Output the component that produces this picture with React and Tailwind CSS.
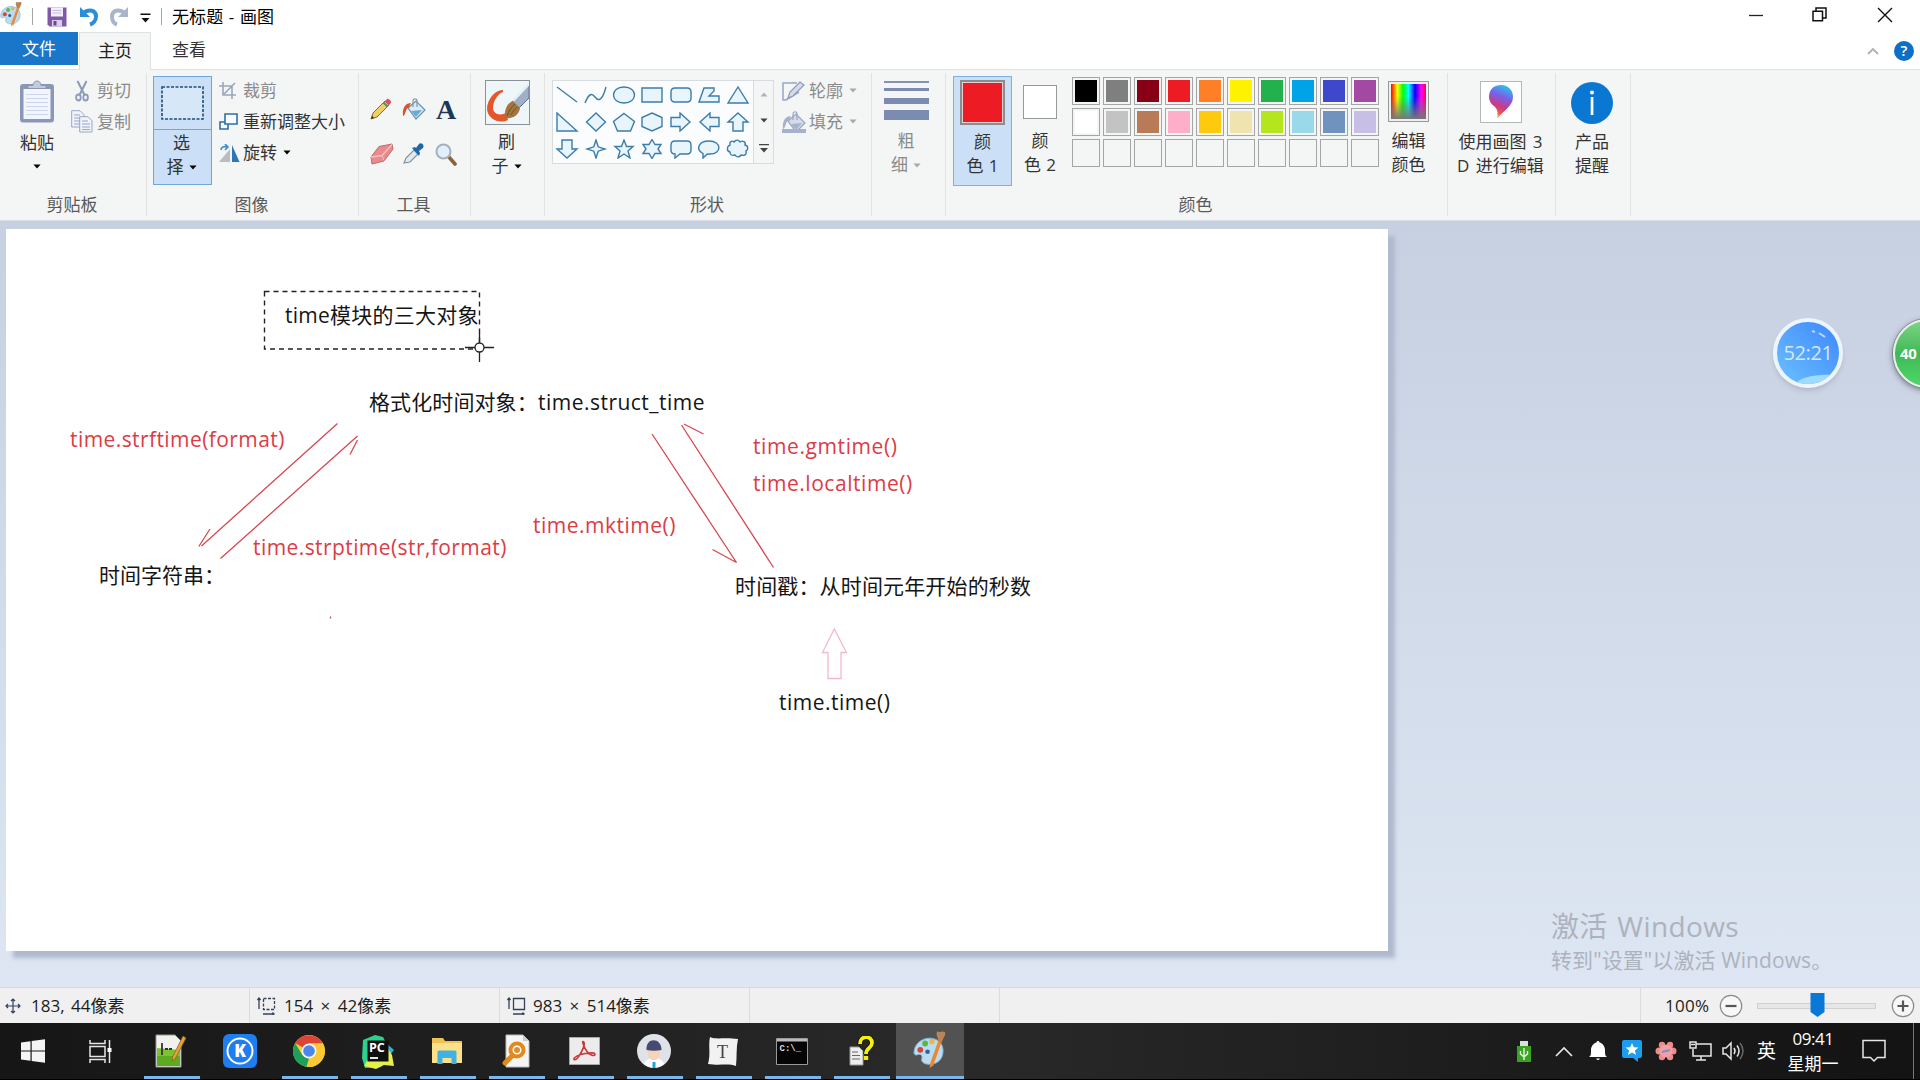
const CJK = "font-['Open_Sans','Noto_Sans_CJK_SC',sans-serif]";

const Caret = ({ className = "text-black" }) => (
  <svg width="8" height="5" viewBox="0 0 9 5" className={"shrink-0 " + className}>
    <path d="M0.5 0.3h8L4.5 4.7z" fill="currentColor" />
  </svg>
);

/* ---------- shared artwork ---------- */
const Palette = ({ size = 24, className = "" }) => (
  <svg width={size} height={size * 1.2} viewBox="0 0 34 40" className={className}>
    <path d="M17 8C8 8 1 15 1 23c0 2 2 3 4 2 3-1 5 1 4 4-1 4 3 6 8 6 9 0 14-6 14-14C31 13 25 8 17 8z" fill="#b9dcee" stroke="#7fb2cf" strokeWidth="1" />
    <circle cx="7.500" cy="20" r="3" fill="#d9433f" />
    <circle cx="12.500" cy="13.500" r="3" fill="#5cb54a" />
    <circle cx="19.500" cy="11.500" r="2.800" fill="#e8b64a" />
    <circle cx="15" cy="22" r="2.400" fill="#35619b" />
    <path d="M26 11l3.500 1L21 36l-4 3 1-6z" fill="#e8883a" />
    <path d="M25 1c3 2 5-1 8 1 1 4-2 5-3 10l-4-1c0-4-3-6-1-10z" fill="#b98458" />
  </svg>
);

/* ---------- title bar ---------- */
function TitleBar() {
  return (
    <header className="flex h-8 shrink-0 items-center bg-white">
      <Palette size={22} className="-mt-1" />
      <i className="ml-[10px] h-[17px] w-px bg-[#a5a5a5]" />
      <svg width="20" height="20" viewBox="0 0 20 20" className="ml-[14px] mt-[2px]">
        <path d="M0.500 0.500h19v19h-17l-2-2z" fill="#8058a8" />
        <path d="M4 0.500h12v9H4z" fill="#f3eff8" />
        <path d="M5.500 3.500h9M5.500 6h9" stroke="#cbb9de" />
        <path d="M5 13h10v6.500H5z" fill="#d9cfe6" />
        <path d="M6.500 14h3v4.500h-3z" fill="#6b4493" />
      </svg>
      <svg width="21" height="21" viewBox="0 0 21 21" className="ml-[12px]">
        <path d="M5 6.500C10 3 17 4 17 10.500c0 4-3 7-6 8" fill="none" stroke="#2b8fd6" strokeWidth="4" />
        <path d="M1 1v10h10z" fill="#2b8fd6" />
      </svg>
      <svg width="21" height="21" viewBox="0 0 21 21" className="ml-[8px]">
        <path d="M16 6.500C11 3 4 4 4 10.500c0 4 2 7 5 8" fill="none" stroke="#a9b5cb" strokeWidth="4" />
        <path d="M20 1v10H10z" fill="#a9b5cb" />
      </svg>
      <svg width="11" height="10" viewBox="0 0 11 10" className="ml-[11px] mt-[4px]">
        <path d="M0.500 0.500h10v1.500H.5zM1.500 5h8l-4 4.500z" fill="#111" />
      </svg>
      <i className="ml-[10px] h-[17px] w-px bg-[#a5a5a5]" />
      <span className="ml-[10px] mt-px text-[17px] tracking-[0.1px] text-black [word-spacing:1px]">无标题 - 画图</span>
      <div className="-mt-[3px] ml-auto mr-[27px] flex items-center gap-[49px]">
        <svg width="14" height="16" viewBox="0 0 14 16"><path d="M0 8.500h14" stroke="#222" strokeWidth="1.300" /></svg>
        <svg width="15" height="15" viewBox="0 0 15 15" fill="none" stroke="#111" strokeWidth="1.500">
          <path d="M1 4.200h9.500v9.500H1zM4 4V1h10v10h-3" />
        </svg>
        <svg width="16" height="16" viewBox="0 0 16 16" className="ml-[1px]"><path d="M1 1l14 14M15 1L1 15" stroke="#111" strokeWidth="1.400" /></svg>
      </div>
    </header>
  );
}

function Tabs() {
  return (
    <nav className="flex h-[38px] shrink-0 items-start border-b border-[#dfe1e3] bg-white text-[17px]">
      <span className="flex h-[33px] w-[78px] items-center justify-center bg-[#1976c9] text-white">文件</span>
      <span className="z-10 ml-px flex h-[38px] w-[72px] items-center justify-center border-x border-t border-[#dfe1e3] bg-[#f4f6f6] pb-[2px] text-[#222]">主页</span>
      <span className="ml-[21px] flex h-[36px] items-center text-[#333]">查看</span>
      <div className="ml-auto mr-[6px] flex h-[37px] items-center gap-[15px]">
        <svg width="12" height="8" viewBox="0 0 12 8"><path d="M1 7l5-5 5 5" fill="none" stroke="#b0b0b0" strokeWidth="1.800" /></svg>
        <b className="flex size-5 items-center justify-center rounded-full bg-[#0f6fc4] text-[15px] font-semibold leading-none text-white">?</b>
      </div>
    </nav>
  );
}

/* ---------- ribbon ---------- */
function Group({ width, label, children }) {
  return (
    <section className={"flex shrink-0 flex-col border-r border-[#e0e2e3] " + width}>
      <div className="flex h-[119px] items-start">{children}</div>
      <div className="flex h-[24px] items-center justify-center pr-[2px] text-[17px] leading-none text-[#5a5a5a]">{label}</div>
    </section>
  );
}

const Stack = ({ a, b, arrow, className = "" }) => (
  <div className={"flex flex-col items-center text-[17px] leading-6 " + className}>
    <span>{a}</span>
    <span className="flex items-center gap-[5px]">{b}{arrow && <Caret className={arrow} />}</span>
  </div>
);

const PasteIcon = () => (
  <svg width="36" height="44" viewBox="0 0 36 44">
    <rect x="1" y="4" width="34" height="38.500" rx="3" fill="#8b97b6" />
    <path d="M4.500 9h27v30h-27z" fill="#f2f5fb" />
    <path d="M7 14.500h22M7 18.500h22M7 22.500h22M7 26.500h22M7 30.500h22M7 34.500h22" stroke="#cbd6e8" />
    <path d="M9 8.500V5.500h5c0-6 8-6 8 0h5v3z" fill="#c3cbdd" stroke="#8b97b6" />
  </svg>
);
const CutIcon = () => (
  <svg width="14" height="22" viewBox="0 0 14 22" fill="none" stroke="#8d9ab8">
    <path d="M2.500 1L9.500 15M11.500 1L4.500 15" strokeWidth="2" />
    <ellipse cx="3.400" cy="17.500" rx="2.300" ry="3" strokeWidth="1.800" />
    <ellipse cx="10.600" cy="17.500" rx="2.300" ry="3" strokeWidth="1.800" />
  </svg>
);
const CopyIcon = () => (
  <svg width="22" height="23" viewBox="0 0 22 23" fill="#f1f4fb" stroke="#98a5c3">
    <path d="M0.700 0.700h8.300l4 4V17H.7z" /><path d="M3 5h6M3 8h6M3 11h6M3 14h6" />
    <path d="M8.700 6.700h8.300l4 4V22H8.700z" /><path d="M11 11h6M11 14h8M11 17h8M11 19.500h8" />
  </svg>
);
const CropIcon = () => (
  <svg width="18" height="17" viewBox="0 0 18 17" fill="none" stroke="#9ba6bd" strokeWidth="1.600">
    <path d="M4 0v13h13M0 4h13v13M5 12L16 1" />
  </svg>
);
const ResizeIcon = () => (
  <svg width="19" height="17" viewBox="0 0 19 17" fill="#f8fbfe" stroke="#2f6fa6" strokeWidth="1.600">
    <path d="M1 9h8v7H1z" /><path d="M6 1h12v10H6z" />
  </svg>
);
const RotateIcon = () => (
  <svg width="21" height="18" viewBox="0 0 21 18">
    <path d="M11 5v13H0z" fill="#b9bcc0" /><path d="M13 1v17h7.500z" fill="#2c78b4" />
    <path d="M2 6c0-3 3-4 6-3M6 0l3 3-3 3" fill="none" stroke="#3b8bd0" strokeWidth="1.600" />
  </svg>
);

const Pencil = () => (
  <svg width="22" height="22" viewBox="0 0 22 22">
    <path d="M1 21l2-6L15 3l4 4L7 19z" fill="#f3cf63" stroke="#8d6b2e" />
    <path d="M15 3l2-2c1-1 5 2 4 4l-2 2z" fill="#d9536a" /><path d="M13.500 4.500l4 4" stroke="#5d8a6b" strokeWidth="2" />
    <path d="M1 21l1.200-3.200L4 20z" fill="#333" />
  </svg>
);
const Bucket = ({ muted }) => (
  <svg width="24" height="22" viewBox="0 0 24 22">
    <path d="M6 10l8-7 9 9-9 9z" fill={muted ? "#d5dbe9" : "#d9ecf8"} stroke={muted ? "#98a5c3" : "#6792b3"} strokeWidth="1.200" />
    <path d="M9 13l11-1-6 7z" fill={muted ? "#a6b1cb" : "#66aada"} />
    <path d="M11 9V3c0-3 4-3 4 0v6" fill="none" stroke={muted ? "#98a5c3" : "#8296a4"} strokeWidth="1.200" />
    <path d="M9 5C4 5 0 9 1 18c3-1 2-7 6-9z" fill={muted ? "#a6b1cb" : "#d9532c"} />
    {muted && <path d="M0 18h24v4H0z" fill="#a6b1cb" />}
  </svg>
);
const Eraser = () => (
  <svg width="24" height="22" viewBox="0 0 24 22">
    <path d="M1 14L9 3.500l13-2.500 1 5-9 12L2 21z" fill="#e98a8d" stroke="#c2686c" />
    <path d="M1 14l11-1.500L22 1.500" fill="none" stroke="#f7bfc0" strokeWidth="1.400" /><path d="M12 12.500l2 5" stroke="#f7bfc0" />
  </svg>
);
const Dropper = () => (
  <svg width="23" height="22" viewBox="0 0 23 22">
    <path d="M2 20L4 15 12 7l4 4-8 8z" fill="#dfe9f0" stroke="#85929d" strokeWidth="1.200" />
    <path d="M10 5l3-1 1 1 3-4c2-2 6 1 4 4l-4 3 1 2-1 3z" fill="#1f66ab" />
  </svg>
);
const Magnifier = () => (
  <svg width="22" height="23" viewBox="0 0 22 23">
    <path d="M13 13l7 8" stroke="#8a6339" strokeWidth="3.600" strokeLinecap="round" />
    <circle cx="8.500" cy="8.500" r="7" fill="#e1effb" stroke="#a6afbb" strokeWidth="2" />
  </svg>
);
const BrushArt = () => (
  <svg width="43" height="43" viewBox="0 0 43 43">
    <path d="M0 0h43v43H0z" fill="#eef6f9" />
    <path d="M17 9C11 8 1 17 1 28c1 11 13 15 21 11l-2-7c-6 3-13 1-13-5 0-8 6-15 10-16z" fill="#e4572b" />
    <path d="M43 3v14L32 28l-7-6z" fill="#9fb0c6" stroke="#61728d" /><path d="M43 3L27 20" stroke="#e5edf5" strokeWidth="2.500" />
    <path d="M19 37c-1-8 2-15 8-17l7 7c-1 7-7 11-15 10z" fill="#a3763f" /><path d="M21 35c2-5 4-9 8-12M25 34c2-4 4-6 6-8" stroke="#6f4e28" fill="none" />
  </svg>
);

const SHAPES = [
  "M2 2l20 15", "M1 18C5 8 8 8 11 12s7 5 11-10", "M12 2c14 0 14 16 0 16S-2 2 12 2z", "M2 3h20v14H2z",
  "M6 3h12q4 0 4 4v6q0 4-4 4H6q-4 0-4-4V7q0-4 4-4z", "M2 17L7 3h10v3l-5 5h10v6z", "M12 2l10 16H2z",
  "M2 1v18h20z", "M12 1l9.500 9L12 19l-9.500-9z", "M12 1.500l10.500 8L18.500 19h-13L1.500 9.500z", "M12 1l10 4.500v9L12 19 2 14.500v-9z",
  "M2 5.500h9V1l10 9-10 9v-4.500H2z", "M22 5.500h-9V1L3 10l10 9v-4.500h9z", "M12 1l10 9h-5v9H7v-9H2z",
  "M7 1h10v9h5l-10 9-10-9h5z", "M12 1l2.200 6.800L21 10l-6.800 2.200L12 19l-2.200-6.800L3 10l6.800-2.200z",
  "M12 1l2.500 6.500H21l-5 4.500 2 7-6-4-6 4 2-7-5-4.500h6.500z", "M12 0.500l3 5h6L18 10l3 4.500h-6l-3 5-3-5H3L6 10 3 5.500h6z",
  "M6 2h12q4 0 4 4v5q0 4-4 4h-7l-5 4v-4q-4 0-4-4V6q0-4 4-4z", "M12 2c13 0 13 13 1 13l-3 .2L6 19v-4.500C-2 10 2 2 12 2z",
  "M8 3c2-3 5-2 6 0 3-2 6 0 5 3 4 1 3 5 1 6 1 4-2 5-5 4-2 3-5 2-6 0-3 1-5 0-5-3-4-1-3-6 0-7-1-3 2-5 4-3z",
];

const Outline = () => (
  <svg width="23" height="20" viewBox="0 0 23 20">
    <path d="M15 2H1v17h3l13-8" fill="none" stroke="#98a5c3" strokeWidth="1.500" />
    <path d="M6 17l2-6L18 1l4 3-11 11z" fill="#d5dbe9" stroke="#8d9bbb" strokeWidth="1.200" />
  </svg>
);

const ROW1 = ["bg-black", "bg-[#7f7f7f]", "bg-[#880015]", "bg-[#ed1c24]", "bg-[#ff7f27]", "bg-[#fff200]", "bg-[#22b14c]", "bg-[#00a2e8]", "bg-[#3f48cc]", "bg-[#a349a4]"];
const ROW2 = ["bg-white", "bg-[#c3c3c3]", "bg-[#b97a57]", "bg-[#ffaec9]", "bg-[#ffc90e]", "bg-[#efe4b0]", "bg-[#b5e61d]", "bg-[#99d9ea]", "bg-[#7092be]", "bg-[#c8bfe7]"];
const ROW3 = Array(10).fill("bg-transparent");

function Ribbon() {
  return (
    <div className="flex h-[151px] shrink-0 border-b border-[#dadfe8] bg-[#f4f6f6] pb-[4px] pt-[3px] text-[#333]">
      <Group width="w-[147px]" label="剪贴板">
        <div className="ml-[18px] mt-[7px] flex w-[38px] flex-col items-center">
          <PasteIcon />
          <span className="mt-[5px] text-[17px] leading-7">粘贴</span>
          <Caret className="mt-[7px] text-black" />
        </div>
        <div className="ml-[15px] mt-[7px] flex flex-col gap-[8px] text-[17px] leading-[22px] text-[#8b8b8b]">
          <div className="flex h-[22px] items-center gap-[8px] pl-[4px]"><CutIcon />剪切</div>
          <div className="flex h-[23px] items-center gap-[4px]"><CopyIcon />复制</div>
        </div>
      </Group>

      <Group width="w-[212px]" label="图像">
        <div className="ml-[6px] mt-[3px] flex h-[109px] w-[59px] flex-col items-center border border-[#6fa6dc] bg-[#cbe0f6]">
          <div className="flex h-[53px] w-full items-center justify-center border-b border-[#6fa6dc]">
            <svg width="43" height="34" viewBox="0 0 43 34"><rect x="1" y="1" width="41" height="32" fill="#d6e8f8" stroke="#1e4d78" strokeWidth="1.600" strokeDasharray="3 1.500" /></svg>
          </div>
          <Stack a="选" b="择" arrow="text-black" className="-ml-[2px] mt-px" />
        </div>
        <div className="ml-[7px] mt-[2px] flex flex-col text-[17px]">
          <div className="flex h-[31px] items-center gap-[6px] text-[#8b8b8b]"><CropIcon />裁剪</div>
          <div className="flex h-[31px] items-center gap-[5px]"><ResizeIcon />重新调整大小</div>
          <div className="flex h-[31px] items-center gap-[3px]"><RotateIcon />旋转<Caret className="ml-[3px] text-black" /></div>
        </div>
      </Group>

      <Group width="w-[112px]" label="工具">
        <div className="ml-[11px] mt-[25px] grid grid-cols-[32px_33px_24px] grid-rows-[45px_24px] items-start">
          <Pencil /><Bucket /><b className="pl-[1px] font-['Liberation_Serif',serif] text-[28px] leading-[24px] text-[#1c3558]">A</b>
          <Eraser /><Dropper /><Magnifier />
        </div>
      </Group>

      <Group width="w-[74px]" label="">
        <div className="flex w-full flex-col items-center pt-[7px]">
          <div className="border border-[#8a9297]"><BrushArt /></div>
          <Stack a="刷" b="子" arrow="text-black" className="-ml-[2px] mt-[5px]" />
        </div>
      </Group>

      <Group width="w-[327px]" label="形状">
        <div className="ml-[7px] mt-[7px] flex h-[84px] w-[222px] border border-[#d9dcdf] bg-[#fafcfd]">
          <div className="grid w-[200px] grid-cols-7 grid-rows-3 place-items-center pr-[1px]">
            {SHAPES.map((d, i) => (
              <svg key={i} width="24" height="20" viewBox="0 0 24 20"><path d={d} fill={i < 2 ? "none" : "#e9f5fc"} stroke="#3c7cab" strokeWidth="1.400" /></svg>
            ))}
          </div>
          <div className="flex w-5 flex-col items-center justify-around border-l border-[#d9dcdf] bg-[#f4f6f6]">
            <Caret className="rotate-180 text-[#b0b4b8]" />
            <Caret className="text-[#444]" />
            <svg width="10" height="9" viewBox="0 0 10 9"><path d="M0 0h10v1.300H0zM1 4h8L5 8.500z" fill="#444" /></svg>
          </div>
        </div>
        <div className="ml-[8px] mt-[2px] flex flex-col text-[17px] text-[#8b8b8b]">
          <div className="flex h-[31px] items-center gap-[4px]"><Outline />轮廓<Caret className="ml-[2px] text-[#a8a8a8]" /></div>
          <div className="flex h-[31px] items-center gap-[3px]"><Bucket muted />填充<Caret className="ml-[3px] text-[#a8a8a8]" /></div>
        </div>
      </Group>

      <Group width="w-[74px]" label="">
        <div className="ml-[12px] flex w-[45px] flex-col items-center pt-[8px]">
          <i className="h-[2px] w-full bg-[#8493b5]" /><i className="mt-[5px] h-[3px] w-full bg-[#7c8cb0]" />
          <i className="mt-[7px] h-[6px] w-full bg-[#7c8cb0]" /><i className="mt-[6px] h-[10px] w-full bg-[#7c8cb0]" />
          <Stack a="粗" b="细" arrow="text-[#a8a8a8]" className="-ml-px mt-[9px] text-[#8b8b8b]" />
        </div>
      </Group>

      <Group width="w-[502px]" label="颜色">
        <div className="ml-[7px] mt-[3px] flex h-[110px] w-[59px] flex-col items-center border border-[#7db1e6] bg-[#cbe0f6] pt-[3px]">
          <div className="size-[45px] border-2 border-[#8c8c8c] bg-[#ed1c24] outline-1 -outline-offset-3 outline-[#e6d0d4]" />
          <Stack a="颜" b="色 1" className="mt-[5px] [word-spacing:1px]" />
        </div>
        <div className="ml-[1px] flex w-[54px] flex-col items-center pt-[12px]">
          <div className="size-[34px] border border-[#999] bg-white" />
          <Stack a="颜" b="色 2" className="mt-[10px] [word-spacing:1px]" />
        </div>
        <div className="ml-[5px] mt-[4px] grid grid-cols-10 gap-[3px]">
          {[...ROW1, ...ROW2, ...ROW3].map((c, i) => (
            <div key={i} className="size-7 border border-[#a3a5a7] p-[2px]"><div className={"size-full " + c} /></div>
          ))}
        </div>
        <div className="ml-[9px] mt-[8px] flex flex-col items-center">
          <div className="size-[41px] border border-[#999] bg-[#eee] p-[2px]">
            <div className="size-full bg-[linear-gradient(to_top,#777_0%,transparent_65%),linear-gradient(to_right,#f00,#ff0_18%,#0f0_34%,#0ff_50%,#00f_68%,#f0f_86%,#f04)]" />
          </div>
          <Stack a="编辑" b="颜色" className="mt-[7px]" />
        </div>
      </Group>

      <Group width="w-[108px]" label="">
        <div className="-ml-px flex w-full flex-col items-center pt-[8px]">
          <div className="flex size-[42px] items-center justify-center border border-[#b5b8bb] bg-white">
            <svg width="26" height="36" viewBox="0 0 26 36">
              <defs>
                <linearGradient id="drop" x1="0.700" y1="0" x2="0.400" y2="1">
                  <stop offset="0" stopColor="#28c8ee" /><stop offset="0.350" stopColor="#7a5fe8" /><stop offset="0.650" stopColor="#c93a84" /><stop offset="0.850" stopColor="#f05a4a" /><stop offset="1" stopColor="#ffd23a" />
                </linearGradient>
              </defs>
              <path d="M13 1c8 0 12 6 12 12 0 9-9 13-16 22 1-5 1-9-2-12C3 20 1 17 1 13 1 6 5 1 13 1z" fill="url(#drop)" />
            </svg>
          </div>
          <Stack a="使用画图 3" b="D 进行编辑" className="mt-[7px] whitespace-pre [word-spacing:2px]" />
        </div>
      </Group>

      <Group width="w-[75px]" label="">
        <div className="-ml-px flex w-full flex-col items-center pt-[9px]">
          <div className="size-[42px] rounded-full bg-[#0a78d2]">
            <svg width="42" height="42" viewBox="0 0 42 42" fill="#fff"><circle cx="21" cy="10.500" r="2" /><path d="M19.700 15h2.700v18h-2.700z" /></svg>
          </div>
          <Stack a="产品" b="提醒" className="mt-[6px]" />
        </div>
      </Group>
    </div>
  );
}

/* ---------- drawing area ---------- */
const Note = ({ className, children }) => (
  <span className={"absolute whitespace-nowrap text-[21px] leading-[30px] " + className}>{children}</span>
);

function Workspace() {
  return (
    <main className="relative h-[766px] shrink-0 overflow-hidden bg-linear-to-b from-[#c6d0e1] to-[#dde6f2] pl-[6px] pt-[8px]">
      <div className="relative h-[722px] w-[1382px] bg-white text-[#151515] shadow-[7px_7px_4px_0px_#b0bace]">
        <svg width="1382" height="722" viewBox="6 229 1382 722" className="absolute inset-0" fill="none">
          <g stroke="#d8474f" strokeWidth="1.300">
            <path d="M337.500 423.500L201.500 546M198.800 546.500L210 529" />
            <path d="M220.500 558.500L357.500 436M357.500 440L350 454.500" />
            <path d="M652 434L736.500 562.500L712.500 549.500" />
            <path d="M773.500 567.500L681.500 425M684 424L703.500 434" />
            <path d="M330.500 616.500v2" />
          </g>
          <path d="M834.300 629L846.500 652.500H841V678.500H828V652.500H822.500z" stroke="#f4b8cd" strokeWidth="1.300" />
          <rect x="264.500" y="291.500" width="215" height="57.500" stroke="#222" strokeWidth="1.400" strokeDasharray="5 4" />
          <g stroke="#222" strokeWidth="1.300"><circle cx="479.500" cy="347.500" r="4.500" fill="#fff" /><path d="M465 347.500h10M484 347.500h10M479.500 333v10M479.500 352v10" /></g>
        </svg>
        <Note className="left-[279px] top-[71px] tracking-[0.25px]">time模块的三大对象</Note>
        <Note className="left-[363px] top-[158px] tracking-[0.1px]">格式化时间对象：</Note>
        <Note className="left-[532px] top-[158px] tracking-[0.48px]">time.struct_time</Note>
        <Note className="left-[64px] top-[195px] tracking-[0.42px] text-[#dc3c46]">time.strftime(format)</Note>
        <Note className="left-[247px] top-[303px] tracking-[0.42px] text-[#dc3c46]">time.strptime(str,format)</Note>
        <Note className="left-[527px] top-[281px] tracking-[0.5px] text-[#dc3c46]">time.mktime()</Note>
        <Note className="left-[747px] top-[202px] tracking-[0.6px] text-[#dc3c46]">time.gmtime()</Note>
        <Note className="left-[747px] top-[239px] tracking-[0.55px] text-[#dc3c46]">time.localtime()</Note>
        <Note className="left-[93px] top-[331px]">时间字符串：</Note>
        <Note className="left-[729px] top-[342px] tracking-[0.15px]">时间戳：从时间元年开始的秒数</Note>
        <Note className="left-[773px] top-[458px] tracking-[0.5px]">time.time()</Note>
      </div>
      <div className="absolute left-[1551px] top-[685px] whitespace-nowrap text-[#acb3be]">
        <div className="text-[28px] leading-[40px] tracking-[0.35px] [word-spacing:2px]">激活 Windows</div>
        <div className="text-[21px] leading-[28px] tracking-[0.1px]">转到"设置"以激活 Windows。</div>
      </div>
      <div className="absolute left-[1773px] top-[97px] flex size-[70px] items-center justify-center overflow-hidden rounded-full border-4 border-[#eef4fb] bg-linear-to-tr from-[#6cc0ff] to-[#3f86fb] text-[20px] tracking-[-0.4px] text-[#d4e8ff] shadow-md">
        <svg width="62" height="62" viewBox="0 0 62 62" className="absolute inset-0"><path d="M20 60c8-6 20-8 42-7v9H20z" fill="#9edcff" /><path d="M35 9l3 1M42 11l6 4" stroke="#b7d6ff" strokeWidth="2" /></svg>
        <span className="relative">52:21</span>
      </div>
      <div className="absolute left-[1893px] top-[98px] flex size-[69px] items-center rounded-full border-2 border-[#e9f0ec] bg-linear-to-b from-[#7bd485] via-[#3fb956] to-[#4fd867] pl-[5px] text-[15px] font-bold tracking-tight text-white shadow-[0_2px_6px_#667] ring-1 ring-[#7d8f8a]">40</div>
    </main>
  );
}

/* ---------- status bar ---------- */
const ZoomButton = ({ plus }) => (
  <svg width="24" height="24" viewBox="0 0 24 24"><circle cx="12" cy="12" r="10.700" fill="#f7f7f7" stroke="#8a8a8a" strokeWidth="1.200" /><path d={plus ? "M6.500 12h11M12 6.500v11" : "M6.500 12h11"} stroke="#555" strokeWidth="2.200" /></svg>
);

function StatusBar() {
  return (
    <footer className="flex h-[36px] shrink-0 items-stretch border-t border-[#d5dae1] bg-[#f0f0f0] text-[17px] text-[#1d1d1d] *:flex *:items-center">
      <div className="w-[250px] gap-[10px] border-r border-[#dcdcdc] pl-[5px] [word-spacing:2px]">
        <svg width="16" height="16" viewBox="0 0 16 16" stroke="#33415c" fill="none" strokeWidth="1.200"><path d="M8 1v14M1 8h14M6 3l2-2 2 2M6 13l2 2 2-2M3 6L1 8l2 2M13 6l2 2-2 2" /></svg>
        183, 44像素
      </div>
      <div className="w-[250px] gap-[8px] border-r border-[#dcdcdc] pl-[7px] [word-spacing:3px]">
        <svg width="19" height="18" viewBox="0 0 19 18" stroke="#33415c" fill="none" strokeWidth="1.300"><path d="M2 1v11M0.500 3L2 1l1.500 2M6 17h11M15.500 15.500L17 17l-1.500 1" /><path d="M6.500 1.500h11v11h-11z" strokeDasharray="3 1.500" /></svg>
        154 × 42像素
      </div>
      <div className="w-[250px] gap-[7px] border-r border-[#dcdcdc] pl-[7px] [word-spacing:3px]">
        <svg width="19" height="18" viewBox="0 0 19 18" stroke="#33415c" fill="none" strokeWidth="1.300"><path d="M2 1v11M0.500 3L2 1l1.500 2M6 17h11M15.500 15.500L17 17l-1.500 1" /><path d="M6.500 1.500h11v11h-11z" /></svg>
        983 × 514像素
      </div>
      <div className="w-[250px] border-r border-[#dcdcdc]" />
      <div className="w-[641px] border-r border-[#dcdcdc]" />
      <div className="flex-1 pl-[24px]">
        <span className="w-[54px] tracking-[0.3px]">100%</span>
        <ZoomButton />
        <div className="relative ml-[14px] h-[6px] w-[119px] border border-[#d0d0d0] bg-[#e6e6e6]">
          <svg width="15" height="24" viewBox="0 0 15 24" className="absolute -top-[11px] left-[52px]"><path d="M0.500 0h14v19l-7 5-7-5z" fill="#0a78d7" /></svg>
        </div>
        <div className="ml-[15px] flex"><ZoomButton plus /></div>
      </div>
    </footer>
  );
}

/* ---------- taskbar ---------- */
const NotepadPP = () => (
  <svg width="32" height="34" viewBox="0 0 32 34"><path d="M1 1h19l6 6v26H1z" fill="#f1f1ee" stroke="#999" /><path d="M2 14l23 2v16H2z" fill="#7cc42e" /><path d="M2 22h23v10H2z" fill="#5cab20" /><path d="M7 9v12M10 15h3M14 15h3" stroke="#333" strokeWidth="1.800" /><path d="M28 2l3 2-11 21-3 2 .5-4z" fill="#e3a33b" stroke="#8a5b1c" strokeWidth=".7" /></svg>
);
const KApp = () => (
  <svg width="34" height="34" viewBox="0 0 34 34"><rect width="34" height="34" rx="6" fill="#1f7df2" /><circle cx="17" cy="17" r="12.500" fill="none" stroke="#fff" strokeWidth="2" /><text x="17" y="23" textAnchor="middle" fontSize="17" fontWeight="800" fill="#fff" fontFamily="Open Sans">K</text></svg>
);
const Chrome = () => (
  <svg width="32" height="32" viewBox="0 0 32 32"><circle cx="16" cy="16" r="16" fill="#fbc934" /><path d="M16 16L2.100 8A16 16 0 0 1 29.900 8.500H16z" fill="#dc4437" /><path d="M2.100 8l7.200 12L16 23.500 13.500 31.800A16 16 0 0 1 2.100 8z" fill="#1fa05a" /><path d="M16 8.500h13.900A16 16 0 0 1 14 31.900L22 20z" fill="#fbc934" /><circle cx="16" cy="16" r="7.500" fill="#f4f4f4" /><circle cx="16" cy="16" r="5.800" fill="#4a86ec" /></svg>
);
const PyCharm = () => (
  <svg width="34" height="35" viewBox="0 0 34 35"><path d="M2 6L14 1l8 2 4 8-6 22-16 1-3-10z" fill="#2fd08c" /><path d="M24 8l9 8-4 5z" fill="#24b5e0" /><path d="M26 13l5 8 2 11-10-1-8 4-12-3 5-9z" fill="#e6f04d" /><rect x="6.500" y="6.500" width="21" height="21" fill="#101010" /><text x="8" y="18" fontSize="12.500" fontWeight="700" fill="#fff" fontFamily="Open Sans">PC</text><path d="M9 24h8" stroke="#fff" strokeWidth="1.800" /></svg>
);
const Explorer = () => (
  <svg width="32" height="28" viewBox="0 0 32 28"><path d="M1 3V1h11l2 3h17v22H1z" fill="#efc253" /><path d="M1 6h30v20H1z" fill="#fde08a" /><path d="M6.500 27V15q0-1.500 1.500-1.500h16q1.500 0 1.500 1.500v12h-5v-6h-9v6z" fill="#3fb1e3" /></svg>
);
const SearchDoc = () => (
  <svg width="28" height="34" viewBox="0 0 28 34"><path d="M4 1h17l6 6v26H4z" fill="#f5f5f5" stroke="#bbb" /><path d="M21 1v6h6" fill="#ccc" /><path d="M11 21l-8 8" stroke="#e08a1e" strokeWidth="5" strokeLinecap="round" /><circle cx="15" cy="16" r="6.500" fill="#fff" stroke="#e08a1e" strokeWidth="4" /><circle cx="15" cy="16" r="3" fill="#d9902f" /></svg>
);
const Pdf = () => (
  <svg width="31" height="28" viewBox="0 0 31 28"><path d="M0.500 0.500h30v27H.5z" fill="#ececec" stroke="#aaa" /><path d="M14 4.500c3 1 0 8-3 13-2 4-5 6-6 5-1-2 5-5 11-6s10-1 10 1-5 1-8-3-5-10-4-10z" fill="none" stroke="#c8373a" strokeWidth="1.600" /></svg>
);
const Avatar = () => (
  <svg width="34" height="34" viewBox="0 0 34 34"><circle cx="17" cy="17" r="17" fill="#dfe2e8" /><path d="M7 30c2-5 6-6 10-6s8 1 10 6c-6 5-14 5-20 0z" fill="#fff" /><path d="M15.500 28h3v6h-3z" fill="#1ca5d8" /><path d="M11 12h12v8c0 8-12 8-12 0z" fill="#f6d3bb" /><path d="M9.500 16c-1-13 15-13 15 0-5 1-10 1-15 0z" fill="#454a70" /></svg>
);
const Typora = () => (
  <svg width="32" height="31" viewBox="0 0 32 31"><path d="M3 1c6 3 14 0 28 2-2 9-1 18-2 27-8-3-16 0-28-2C4 18 1 10 3 1z" fill="#f2f2f2" /><text x="15.500" y="22" textAnchor="middle" fontSize="18" fill="#444" fontFamily="Liberation Serif">T</text></svg>
);
const Cmd = () => (
  <svg width="32" height="27" viewBox="0 0 32 27"><path d="M0.500 0.500h31v26H.5z" fill="#050505" stroke="#9a9a9a" /><path d="M1 1h30v2.500H1z" fill="#bbb" /><text x="3.500" y="13" fontSize="9" fontWeight="700" fill="#ddd" fontFamily="Liberation Mono">C:\_</text></svg>
);
const HelpDoc = () => (
  <svg width="26" height="30" viewBox="0 0 26 30"><path d="M2 11h9l4 4v14H2z" fill="#eee" stroke="#999" /><path d="M4 16h6M4 19.500h8M4 23h8" stroke="#666" /><path d="M12 8c0-9 12-9 12-1 0 5-6 5-6 11" fill="none" stroke="#111" strokeWidth="5.500" /><path d="M12 8c0-9 12-9 12-1 0 5-6 5-6 11" fill="none" stroke="#f5f00a" strokeWidth="3.800" /><path d="M15.800 20h4.400v4h-4.400z" fill="#f5f00a" /></svg>
);

const APPS = [
  [NotepadPP, true], [KApp, false], [Chrome, true], [PyCharm, true], [Explorer, true], [SearchDoc, true],
  [Pdf, true], [Avatar, true], [Typora, true], [Cmd, true], [HelpDoc, true],
];

function Taskbar() {
  return (
    <div className="flex h-[57px] shrink-0 items-stretch border-b border-black bg-linear-to-r from-[#161616] via-[#292929] to-[#131313] text-white">
      <div className="flex w-[66px] items-center justify-center">
        <svg width="24" height="24" viewBox="0 0 24 24" fill="#f4f4f4"><path d="M0 3.500l9.500-1.300v9.300H0zM10.700 2L24 .2v11.300H10.700zM0 12.600h9.500v9.200L0 20.500zM10.700 12.600H24v11.200L10.700 22z" /></svg>
      </div>
      <div className="flex w-[71px] items-center justify-center pr-px">
        <svg width="24" height="23" viewBox="0 0 24 23" fill="none" stroke="#e6e6e6" strokeWidth="1.500"><path d="M1 0v3.500h15V0M1 23v-3.500h15V23M1 6.500h15v10H1zM20.500 0v23" /><path d="M18.500 8h4v4h-4z" fill="#fff" stroke="none" /></svg>
      </div>
      {APPS.map(([Icon, open], i) => (
        <div key={i} className="flex w-[69px] flex-col items-center">
          <div className="flex h-[53px] items-center pr-[2px] pt-[3px]"><Icon /></div>
          {open && <i className="h-[3px] w-[56px] bg-[#76b9ed]" />}
        </div>
      ))}
      <div className="flex w-[68px] flex-col items-center bg-[#525252]">
        <div className="flex h-[53px] items-center pr-[2px]"><Palette size={33} /></div>
        <i className="h-[3px] w-full bg-[#76b9ed]" />
      </div>
      <div className="ml-auto flex items-center">
        <svg width="14" height="21" viewBox="0 0 14 21"><path d="M3 0h8v5H3z" fill="#ddd" /><path d="M0 5h14v16H0z" fill="#3aa321" /><path d="M7 7v12M3.500 10v3l3.500 3M10.500 10v3L7 16" fill="none" stroke="#e7f7e2" strokeWidth="1.400" /></svg>
        <svg width="18" height="11" viewBox="0 0 18 11" className="ml-[24px]"><path d="M1 10l8-8 8 8" fill="none" stroke="#e6e6e6" strokeWidth="1.700" /></svg>
        <svg width="18" height="20" viewBox="0 0 18 20" fill="#fff" className="ml-[16px]"><path d="M0 16c2-1 2-3 2-7 0-4 3-7 5.500-7.500 0-2 3-2 3 0C13 2 16 5 16 9c0 4 0 6 2 7zM7 17.500h4q-2 3-4 0z" /></svg>
        <svg width="20" height="22" viewBox="0 0 20 22" className="ml-[15px]"><path d="M2 0h16q2 0 2 2v14q0 2-2 2h-2v4l-5-4H2q-2 0-2-2V2q0-2 2-2z" fill="#1c9df0" /><path d="M10 3l1.800 4.200 4.700.3-3.600 3 1.200 4.600L10 12.600l-4.100 2.500 1.200-4.600-3.600-3 4.700-.3z" fill="#fff" /></svg>
        <svg width="22" height="20" viewBox="0 0 22 20" className="ml-[13px]" fill="#ee8c8c"><circle cx="7" cy="4" r="3.200" /><circle cx="15" cy="4" r="3.200" /><circle cx="4" cy="10" r="3.500" /><circle cx="18" cy="10" r="3.500" /><circle cx="7" cy="16" r="3.200" /><circle cx="15" cy="16" r="3.200" /><circle cx="11" cy="10" r="6.500" fill="#f3a0a4" /><path d="M7 11l8-2" stroke="#7d8ccb" strokeWidth="2" /></svg>
        <svg width="23" height="20" viewBox="0 0 23 20" className="ml-[12px]" fill="none" stroke="#e6e6e6" strokeWidth="1.500"><path d="M7 3h15v12H4V8M12 15v4M7 19h10M1 1h6v6H1zM2 3.500h4" /></svg>
        <svg width="22" height="20" viewBox="0 0 22 20" className="ml-[10px]" fill="none" stroke="#e6e6e6" strokeWidth="1.500"><path d="M1 7h3l5-5v16l-5-5H1zM12 7q2 3 0 6M15 4.500q4 5.500 0 11" /><path d="M18 2q6 8 0 16" stroke="#666" /></svg>
        <span className="ml-[13px] text-[19px] leading-none">英</span>
        <div className="ml-[11px] mr-px flex w-[52px] flex-col items-center whitespace-nowrap text-[17px] leading-[25px]"><span className="tracking-[-0.5px]">09:41</span><span>星期一</span></div>
        <svg width="24" height="24" viewBox="0 0 24 24" className="ml-[22px]" fill="none" stroke="#e6e6e6" strokeWidth="1.500"><path d="M1 1.500h22v17h-7.500L12 22l-3.500-3.500H1z" /></svg>
        <i className="ml-[27px] mr-[6px] h-[56px] w-px bg-[#777]" />
      </div>
    </div>
  );
}

export default function App() {
  return (
    <div className={"flex h-[1080px] w-[1920px] flex-col overflow-hidden bg-white " + CJK}>
      <TitleBar />
      <Tabs />
      <Ribbon />
      <Workspace />
      <StatusBar />
      <Taskbar />
    </div>
  );
}
